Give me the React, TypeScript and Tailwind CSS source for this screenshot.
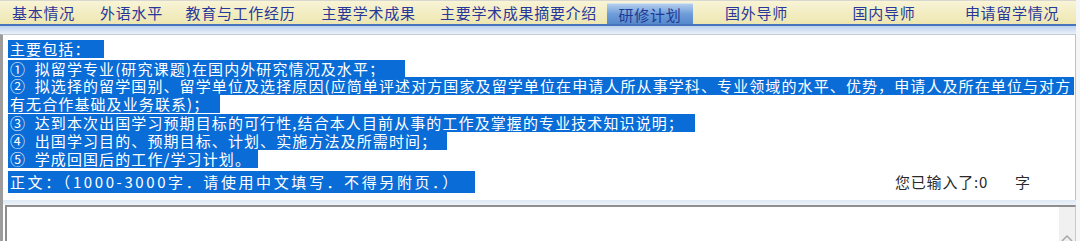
import React from "react";

const tabs = [
  { t: "基本情况", w: "w-[87px]" },
  { t: "外语水平", w: "w-[89px]" },
  { t: "教育与工作经历", w: "w-[129px]" },
  { t: "主要学术成果", w: "w-[127px]" },
  { t: "主要学术成果摘要介绍", w: "w-[173px]" },
  { t: "研修计划", w: "w-[86px]", active: true },
  { t: "国外导师", w: "w-[127px]" },
  { t: "国内导师", w: "w-[128px]" },
  { t: "申请留学情况", w: "w-[128px]" },
];

const lines = [
  { t: "主要包括：", cls: "mt-[5px] h-[18px] w-[96px]" },
  { t: "①\u2002拟留学专业(研究课题)在国内外研究情况及水平；", cls: "mt-[2px] h-[17px] w-[397px]" },
  {
    t: "②\u2002拟选择的留学国别、留学单位及选择原因(应简单评述对方国家及留学单位在申请人所从事学科、专业领域的水平、优势，申请人及所在单位与对方",
    cls: "h-[18px] w-[1066px]",
  },
  { t: "有无合作基础及业务联系)；", cls: "h-[18px] w-[212px]" },
  { t: "③\u2002达到本次出国学习预期目标的可行性,结合本人目前从事的工作及掌握的专业技术知识说明；", cls: "mt-[1px] h-[18px] w-[687px]" },
  { t: "④\u2002出国学习目的、预期目标、计划、实施方法及所需时间；", cls: "h-[18px] w-[439px]" },
  { t: "⑤\u2002学成回国后的工作/学习计划。", cls: "h-[18px] w-[250px]" },
];

export default function App() {
  return (
    <div className="w-[1080px] h-[241px] overflow-hidden bg-[#f4f6f8] font-['Noto_Sans_CJK_SC',sans-serif]">
      <div className="w-[1076px] bg-white">
        {/* tab bar */}
        <div className="flex h-[26px] border-t border-[#d8d8d0] bg-gradient-to-b from-[#f8f4d6] to-[#eee6b0] border-b-2 border-b-[#4775bd]">
          {tabs.map((tab) =>
            tab.active ? (
              <div
                key={tab.t}
                className={`${tab.w} ml-[2px] mt-[2px] flex items-center justify-center bg-gradient-to-b from-[#b4cdec] via-[#6e9dd9] to-[#5688cc] border-t border-[#d4e2f4] text-[15px] leading-none tracking-[0.7px] text-[#1f3a96]`}
              >
                {tab.t}
              </div>
            ) : (
              <div
                key={tab.t}
                className={`${tab.w} flex items-center justify-center text-[15px] leading-none tracking-[0.7px] text-[#28379a]`}
              >
                {tab.t}
              </div>
            )
          )}
        </div>
        {/* blue band */}
        <div className="h-[8px] bg-gradient-to-b from-[#bcd2ee] to-[#eaf1fa]" />
        {/* content box */}
        <div className="h-[166px] border-l-[3px] border-l-[#9c9c9c] border-t border-t-[#c4ccd4] border-r border-r-[#b8c4d0] pl-[5px] flex flex-col">
          {lines.map((l) => (
            <div key={l.t} className="flex">
              <span
                className={`${l.cls} inline-block bg-[#0a6cd6] text-white text-[15px] leading-[18px] tracking-[1.1px] whitespace-nowrap pl-[2px] overflow-hidden`}
              >
                {l.t}
              </span>
            </div>
          ))}
          <div className="mt-[3px] flex items-center">
            <span className="inline-block h-[22px] w-[467px] bg-[#0a6cd6] text-white text-[15px] leading-[22px] tracking-[2.6px] whitespace-nowrap pl-[2px]">
              正文：（1000-3000字．请使用中文填写．不得另附页．）
            </span>
            <span className="ml-[420px] text-[15px] leading-[22px] tracking-[0.8px] text-[#2a2a2a] whitespace-nowrap">
              您已输入了:0
            </span>
            <span className="ml-[27px] text-[15px] leading-[22px] text-[#2a2a2a]">字</span>
          </div>
        </div>
        {/* light band */}
        <div className="h-[5px] border-l-[3px] border-l-[#9c9c9c] bg-gradient-to-b from-[#dce8f4] to-[#eef3f8]" />
        {/* textarea */}
        <div className="h-[40px] border-l-[3px] border-l-[#9c9c9c] pl-[2px] bg-white">
          <div className="h-full flex border-t-2 border-l-2 border-[#8e8e8e] border-r border-r-[#c8c8c8]">
            <div className="flex-1 bg-white" />
            <div className="w-[16px] bg-[#f0f0f0] flex flex-col items-center justify-end pb-[3px]">
              <svg width="12" height="8" viewBox="0 0 12 8">
                <path d="M1 7 L6 2 L11 7" fill="none" stroke="#a8a8a8" strokeWidth="1.5" />
              </svg>
            </div>
          </div>
        </div>
      </div>
    </div>
  );
}
